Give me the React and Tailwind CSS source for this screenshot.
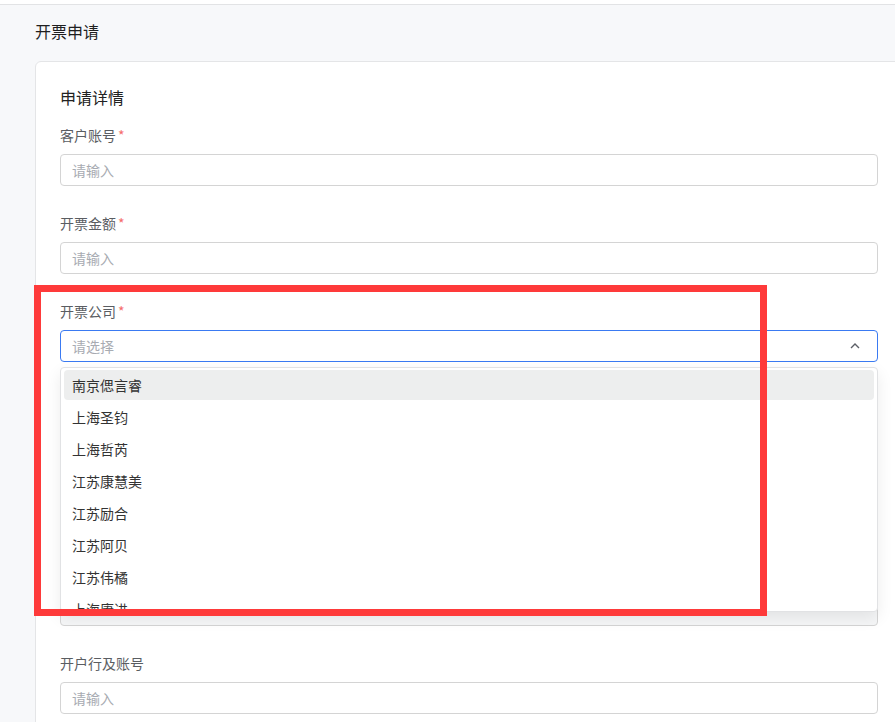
const font = { fontFamily: '"Noto Sans CJK SC", "Noto Sans", sans-serif' }

const companies = ['南京偲言睿', '上海圣钧', '上海哲芮', '江苏康慧美', '江苏励合', '江苏阿贝', '江苏伟橘', '上海赓进']

const Label = ({ text, required }) => (
  <div className="h-[22px] leading-[22px] text-[14px] text-[#5a5d62] mb-2">
    {text}
    {required && <span className="text-[#f56c6c] ml-0.5">*</span>}
  </div>
)

const Input = ({ placeholder = '请输入', muted }) => (
  <div
    className={`h-8 rounded border border-[#d4d4d4] px-[11px] flex items-center text-[14px] text-[#a8abb2] ${
      muted ? 'bg-[#f5f6f7]' : 'bg-white'
    }`}
  >
    {placeholder}
  </div>
)

const Field = ({ label, required, muted }) => (
  <div className="mb-[26px]">
    <Label text={label} required={required} />
    <Input placeholder={label ? '请输入' : ''} muted={muted} />
  </div>
)

const App = () => {
  return (
    <div className="relative w-[895px] h-[722px] overflow-hidden bg-[#f7f8fa]" style={font}>
      <div className="h-[5px] bg-white border-b border-[#e2e3e5]"></div>

      <div className="pl-[35px]">
        <div className="pt-[14px] h-[56px] text-[16px] leading-6 text-[#1f1f1f]">开票申请</div>

        <div className="w-[868px] bg-white border border-[#e4e5e7] rounded-md px-6 pt-[23px]">
          <div className="text-[16px] leading-6 text-[#222] mb-[15px]">申请详情</div>

          <Field label="客户账号" required />
          <Field label="开票金额" required />

          {/* select with open dropdown */}
          <div className="mb-[26px] relative z-10">
            <Label text="开票公司" required />
            <div className="h-8 rounded border border-[#3a7af2] px-[11px] flex items-center justify-between text-[14px] text-[#a8abb2] bg-white">
              <span>请选择</span>
              <svg width="12" height="12" viewBox="0 0 12 12" className="mr-[5px]">
                <polyline points="2,8 6,4 10,8" fill="none" stroke="#5c5f66" strokeWidth="1.4" />
              </svg>
            </div>
            <div className="absolute left-0 right-0 top-[67px] h-[245px] overflow-hidden bg-white border border-[#e1e2e4] rounded-[4px] shadow-[0_6px_16px_rgba(0,0,0,0.08)] px-[3px] pt-[2px]">
              {companies.map((c, i) => (
                <div
                  key={c}
                  className={`h-[30px] mb-[2px] rounded px-2 flex items-center text-[14px] text-[#333] ${
                    i === 0 ? 'bg-[#edeeee]' : ''
                  }`}
                >
                  {c}
                </div>
              ))}
            </div>
          </div>

          {/* fields hidden behind the open dropdown */}
          <Field label="" />
          <Field label="" />
          <Field label="" muted />
          <Field label="开户行及账号" />
        </div>
      </div>

      {/* annotation */}
      <div className="absolute left-[34px] top-[285px] w-[733px] h-[331px] border-[7px] border-[#fe3a3a] z-20 pointer-events-none"></div>
    </div>
  )
}

export default App
